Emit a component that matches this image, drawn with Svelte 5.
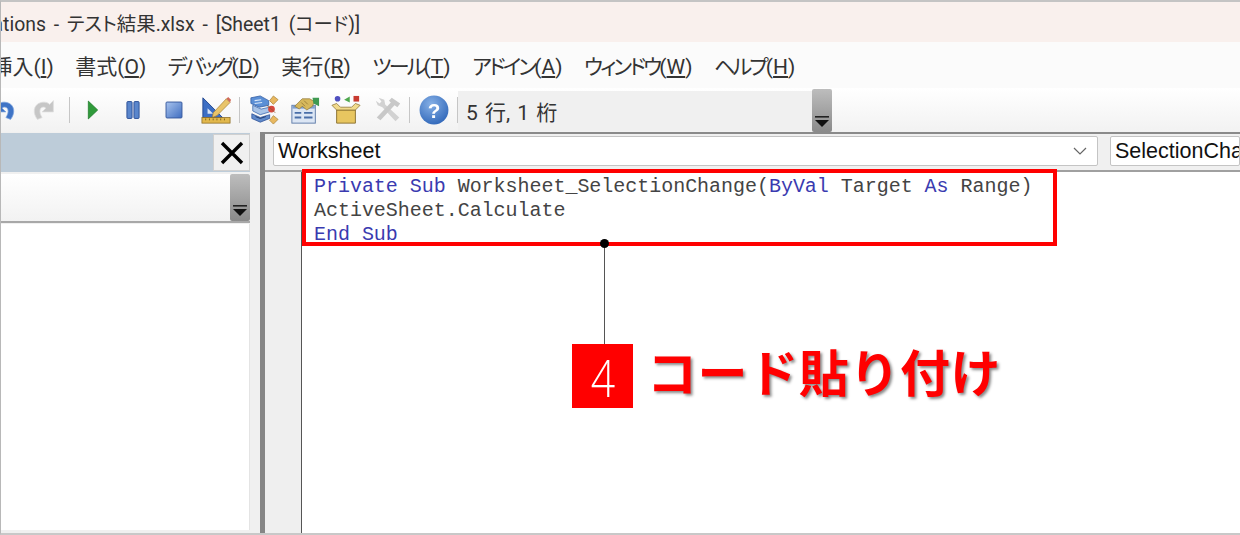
<script>
    const menus = [
        { label: '挿入', key: 'I' },
        { label: '書式', key: 'O' },
        { label: 'デバッグ', key: 'D', kana: true },
        { label: '実行', key: 'R' },
        { label: 'ツール', key: 'T', kana: true },
        { label: 'アドイン', key: 'A', kana: true },
        { label: 'ウィンドウ', key: 'W', kana: true },
        { label: 'ヘルプ', key: 'H', kana: true }
    ];
</script>

{#snippet chevron()}
    <div class="overflow-btn">
        <svg width="20" height="14" viewBox="0 0 20 14">
            <rect x="3" y="0" width="14" height="1.6" fill="#222" />
            <path d="M3 4 H17 L10 11 Z" fill="#111" />
        </svg>
    </div>
{/snippet}

<div class="window">
    <div class="titlebar"><span class="title">Microsoft Visual Basic for Applications - テスト結果.xlsx - [Sheet1 (コード)]</span></div>

    <div class="menubar">
        {#each menus as m, i}
            <span class="menu-item" class:first={i === 0}><span class:kana={m.kana}>{m.label}</span>(<u>{m.key}</u>)</span>
        {/each}
    </div>

    <div class="toolbar">
        <svg class="tb undo" viewBox="0 0 32 32">
            <path transform="translate(32 0) scale(-1 1)" d="M9 26 C4 20 4 10 13 8 C17 7 20 8 22 10 L26 6 V18 H14 L18 14 C16 12 13 13 12 15 C11 18 12 21 14 24 Z" fill="#3f74c6" stroke="#7fa4dc" stroke-width="0.8" />
        </svg>
        <svg class="tb redo" viewBox="0 0 32 32">
            <path d="M9 26 C4 20 4 10 13 8 C17 7 20 8 22 10 L26 6 V18 H14 L18 14 C16 12 13 13 12 15 C11 18 12 21 14 24 Z" fill="#c6c6c6" stroke="#dcdcdc" stroke-width="0.8" />
        </svg>
        <i class="sep sep-a"></i>
        <svg class="tb play" viewBox="0 0 32 32">
            <path d="M11 6.5 L21 16 L11 25.5 Z" fill="#2f9a3a" stroke="#1f7a2a" stroke-width="0.8" />
        </svg>
        <svg class="tb" viewBox="0 0 32 32">
            <rect x="9.5" y="7" width="5.5" height="18" rx="1" fill="#5a86cc" stroke="#2c4f96" />
            <rect x="17" y="7" width="5.5" height="18" rx="1" fill="#5a86cc" stroke="#2c4f96" />
        </svg>
        <svg class="tb stop" viewBox="0 0 32 32">
            <defs>
                <linearGradient id="stopfill" x1="0" y1="0" x2="1" y2="1">
                    <stop offset="0" stop-color="#a9c4ee" />
                    <stop offset="1" stop-color="#3f6dc0" />
                </linearGradient>
            </defs>
            <rect x="7.5" y="7.5" width="17" height="17" rx="1" fill="url(#stopfill)" stroke="#35589c" />
        </svg>
        <svg class="tb design" viewBox="0 0 32 32">
            <path d="M2 3 L23 24 H2 Z" fill="#3c6ec4" stroke="#23478f" />
            <path d="M7 14 L13 20 H7 Z" fill="#d8e4f6" />
            <path d="M13 19 L27 4 L31 8 L17 22 L12 24 Z" fill="#e9c46a" stroke="#a07a30" stroke-width="0.7" />
            <path d="M27 4 L29 2 L32 5 L31 8 Z" fill="#d06a5a" />
            <rect x="1" y="24" width="30" height="6" fill="#e2b84c" stroke="#8a6a20" stroke-width="0.8" />
            <path d="M5 25 V27 M9 25 V27 M13 25 V27 M17 25 V27 M21 25 V27 M25 25 V27" stroke="#6a5010" stroke-width="0.8" />
        </svg>
        <i class="sep sep-b"></i>
        <svg class="tb proj" viewBox="0 0 32 32">
            <path d="M2 3 L12 1 L21 6 L21 11 L11 13 L2 9 Z" fill="#5b8fd6" stroke="#2f5aa0" stroke-width="0.8" />
            <path d="M6 6 L13 5 M6 9 L14 8" stroke="#dbe8f8" stroke-width="1.2" />
            <path d="M4 11 L13 15 L22 13 V18 L12 21 L4 17 Z" fill="#a9c4e8" stroke="#3a66ac" stroke-width="0.8" />
            <path d="M3 20 L12 24 L22 21 V25 L12 29 L3 25 Z" fill="#5f8acb" stroke="#2c4f96" stroke-width="0.8" />
            <path d="M7 23 L12 25 L18 23" stroke="#1f3a70" stroke-width="1" fill="none" />
            <path d="M26 1 L31 5 L26 10 L22 6 Z" fill="#e8b860" stroke="#a07a30" stroke-width="0.7" />
            <circle cx="24" cy="15" r="3.6" fill="#d8483e" />
            <path d="M19 11 L24 15 L28 19" stroke="#8a5a30" stroke-width="0.8" fill="none" />
            <path d="M26 22 L31 26 L26 31 L22 27 Z" fill="#e8b860" stroke="#a07a30" stroke-width="0.7" />
        </svg>
        <svg class="tb" viewBox="0 0 32 32">
            <rect x="2" y="11" width="25" height="19" fill="#dce6f4" stroke="#5d7ba8" />
            <rect x="2.5" y="11.5" width="24" height="3" fill="#7fa0d0" />
            <path d="M5 19 H12 M5 24 H12 M15 19 H24 M15 24 H24" stroke="#4a6fa8" stroke-width="2" />
            <path d="M5 12 L13 4 H21 L26 7 L24 12 L18 16 L13 12 L10 15 Z" fill="#d6b85c" stroke="#8a7030" stroke-width="0.7" />
            <path d="M12 8 L16 12 M15 6 L19 10" stroke="#8a7030" stroke-width="0.8" />
            <path d="M24 3 L31 3 V12 L25 9 Z" fill="#3f9a52" />
        </svg>
        <svg class="tb obj" viewBox="0 0 32 32">
            <circle cx="7" cy="4" r="3" fill="#5050c0" />
            <path d="M14 5 L20 1.5 V8 Z" fill="#4ea84e" />
            <rect x="24" y="1" width="6" height="6" fill="#c83a30" />
            <path d="M6 16 H26 V30 H6 Z" fill="#e8c660" stroke="#8a7030" />
            <path d="M1 11 L6 9 L10 13 H22 L26 9 L31 11 L26 16 H6 Z" fill="#f1da8c" stroke="#8a7030" stroke-width="0.8" />
        </svg>
        <svg class="tb tools" viewBox="0 0 32 32">
            <path d="M6 3 L12 5 L13 10 L28 24 L24 28 L10 13 L5 11 L3 6 L7 9 L9 7 Z" fill="#d2d2d2" />
            <path d="M20 3 L29 9 L26 13 L23 11 L8 27 L4 24 L19 8 L17 6 Z" fill="#c8c8c8" />
        </svg>
        <i class="sep sep-c"></i>
        <svg class="tb help" viewBox="0 0 32 32">
            <defs>
                <radialGradient id="helpfill" cx="0.4" cy="0.3" r="0.8">
                    <stop offset="0" stop-color="#86b0e6" />
                    <stop offset="1" stop-color="#2a62b6" />
                </radialGradient>
            </defs>
            <circle cx="16" cy="16" r="15.4" fill="url(#helpfill)" />
            <text x="16" y="24" class="help-mark">?</text>
        </svg>
        <i class="sep sep-d"></i>
        <div class="status">5 行, 1 桁</div>
        {@render chevron()}
    </div>

    <div class="workspace">
        <aside class="left">
            <div class="panel-head">
                <button class="close-btn" aria-label="閉じる">
                    <svg width="26" height="26" viewBox="0 0 26 26">
                        <path d="M3 3 L23 23 M23 3 L3 23" stroke="#000" stroke-width="3.4" />
                    </svg>
                </button>
            </div>
            <div class="panel-combo">{@render chevron()}</div>
            <div class="panel-list"></div>
        </aside>

        <div class="splitter"></div>

        <section class="editor">
            <div class="combos">
                <div class="combo main">
                    <span>Worksheet</span>
                    <svg width="14" height="8" viewBox="0 0 14 8">
                        <path d="M1 1 L7 7 L13 1" fill="none" stroke="#666" stroke-width="1.2" />
                    </svg>
                </div>
                <div class="combo proc"><span>SelectionChange</span></div>
            </div>
            <div class="code-wrap">
                <div class="gutter"></div>
                <pre class="code"><span class="kw">Private Sub</span> Worksheet_SelectionChange(<span class="kw">ByVal</span> Target <span class="kw">As</span> Range)
ActiveSheet.Calculate
<span class="kw">End Sub</span></pre>
            </div>
        </section>
    </div>

    <div class="highlight"></div>
    <div class="leader"></div>
    <div class="callout">
        <div class="badge"><span>4</span></div>
        <div class="callout-text">コード貼り付け</div>
    </div>
</div>

<style>
    :global(body) {
        margin: 0;
        background: #fff;
    }

    .window {
        position: relative;
        width: 1240px;
        height: 535px;
        overflow: hidden;
        box-sizing: border-box;
        display: flex;
        flex-direction: column;
        border-top: 2px solid #c4c4c4;
        border-left: 1px solid #b8b8b8;
        border-bottom: 2px solid #c8c8c8;
        background: #f0f0f0;
        font-family: Roboto, "Noto Sans CJK JP", sans-serif;
        font-feature-settings: "palt";
        color: #333;
    }

    .titlebar {
        height: 40px;
        flex: none;
        background: #f9f0ed;
        display: flex;
        align-items: center;
        overflow: hidden;
    }

    .title {
        font-size: 19.4px;
        word-spacing: 3px;
        white-space: nowrap;
        margin-left: -302px;
    }

    .menubar {
        height: 46px;
        flex: none;
        background: #fbfbfb;
        display: flex;
        align-items: center;
        gap: 21.5px;
        overflow: hidden;
        font-size: 21px;
        white-space: nowrap;
    }

    .menu-item.first {
        margin-left: -9.5px;
    }

    .kana {
        letter-spacing: -2.8px;
    }

    .toolbar {
        height: 44px;
        flex: none;
        display: flex;
        align-items: center;
        background: linear-gradient(#fff, #f2f2f2);
        overflow: hidden;
    }

    .tb {
        width: 30px;
        height: 30px;
        flex: none;
        margin: 0 5px;
        filter: blur(0.4px);
    }

    .undo { margin-left: -12px; }
    .redo { margin-left: 5px; }
    .play { margin-left: 8px; }
    .stop { margin-left: 6px; }
    .design { margin-left: 7px; margin-right: 6px; }
    .proj { margin-left: 9px; margin-right: 6px; }
    .obj { margin-left: 6px; }
    .tools { margin-left: 7px; }
    .help { margin-left: 9px; }

    .help-mark {
        font: bold 22px "Liberation Sans", sans-serif;
        fill: #fff;
        text-anchor: middle;
    }

    .sep {
        width: 1px;
        height: 26px;
        flex: none;
        background: #c6c6c6;
    }

    .sep-a { margin-left: 5px; }
    .sep-b { margin-left: 2px; }
    .sep-c { margin-left: 1px; }
    .sep-d { margin-left: 3px; }

    .status {
        width: 346px;
        height: 40px;
        margin-top: 2px;
        padding-left: 8px;
        flex: none;
        display: flex;
        align-items: center;
        background: #f0f0f0;
        font-size: 21px;
        word-spacing: 2px;
    }

    .overflow-btn {
        width: 20px;
        height: 43px;
        flex: none;
        display: flex;
        align-items: flex-end;
        padding-bottom: 2px;
        box-sizing: border-box;
        background: linear-gradient(#bdbdbd, #8a8a8a);
        border-radius: 2px;
    }

    .workspace {
        flex: 1;
        min-height: 0;
        display: flex;
    }

    .left {
        width: 249px;
        flex: none;
        display: flex;
        flex-direction: column;
        margin-top: 1px;
    }

    .panel-head {
        height: 39px;
        flex: none;
        display: flex;
        align-items: center;
        justify-content: flex-end;
        background: #bdccd9;
    }

    .close-btn {
        width: 37px;
        height: 37px;
        padding: 0;
        display: flex;
        align-items: center;
        justify-content: center;
        background: #f0f0f0;
        border: 1px solid #d0d0d0;
    }

    .panel-combo {
        height: 47px;
        flex: none;
        margin-top: 2px;
        display: flex;
        justify-content: flex-end;
        background: linear-gradient(#fff, #f2f2f2);
        border-bottom: 2px solid #a8a8a8;
    }

    .panel-combo .overflow-btn {
        height: 47px;
    }

    .panel-list {
        flex: 1;
        background: #fff;
        margin-top: 1px;
        margin-bottom: 3px;
        border-right: 1px solid #e4e4e4;
    }

    .splitter {
        width: 5px;
        flex: none;
        margin-left: 10px;
        background: #868686;
    }

    .editor {
        flex: 1;
        min-width: 0;
        display: flex;
        flex-direction: column;
        border-top: 2px solid #8a8a8a;
    }

    .combos {
        height: 38px;
        flex: none;
        box-sizing: border-box;
        padding: 2px 0 4px 8px;
        display: flex;
        gap: 12px;
        border-bottom: 2px solid #a0a0a0;
    }

    .combo {
        height: 30px;
        box-sizing: border-box;
        display: flex;
        align-items: center;
        padding: 0 4px;
        background: #fff;
        border: 1px solid #c4c4c4;
        border-radius: 2px;
        color: #111;
        font-family: "Liberation Sans", "Noto Sans CJK JP", sans-serif;
        font-size: 21.5px;
        overflow: hidden;
        white-space: nowrap;
    }

    .combo.main {
        width: 825px;
        flex: none;
        justify-content: space-between;
        padding-right: 10px;
    }

    .combo.proc {
        flex: 1;
        min-width: 0;
    }

    .code-wrap {
        flex: 1;
        min-height: 0;
        display: flex;
    }

    .gutter {
        width: 36px;
        flex: none;
        background: #efefef;
        border-right: 1.5px solid #555;
    }

    .code {
        flex: 1;
        margin: 0;
        padding: 3px 0 0 12px;
        background: #fff;
        font-family: "Liberation Mono", monospace;
        font-size: 20px;
        letter-spacing: -0.03px;
        line-height: 24px;
        color: #444;
    }

    .kw {
        color: #3a3ab0;
    }

    .highlight {
        position: absolute;
        left: 301px;
        top: 167px;
        width: 755px;
        height: 77px;
        box-sizing: border-box;
        border: 4px solid #f00;
    }

    .leader {
        position: absolute;
        left: 603px;
        top: 241px;
        width: 1px;
        height: 101px;
        background: #555;
    }

    .leader::before {
        content: "";
        position: absolute;
        left: -4px;
        top: -4px;
        width: 9px;
        height: 9px;
        border-radius: 50%;
        background: #000;
    }

    .callout {
        position: absolute;
        left: 571px;
        top: 342px;
        display: flex;
        align-items: flex-start;
        gap: 14px;
    }

    .badge {
        width: 61px;
        height: 64px;
        display: flex;
        align-items: center;
        justify-content: center;
        background: #f00;
        color: #fff;
        font-family: "Open Sans", sans-serif;
        font-weight: 300;
        font-size: 52px;
    }

    .badge span {
        display: inline-block;
        transform: scaleX(0.82);
    }

    .callout-text {
        font-family: "Noto Sans CJK JP", sans-serif;
        font-feature-settings: normal;
        font-weight: 700;
        font-size: 50px;
        letter-spacing: 0.6px;
        line-height: 52px;
        color: #f00;
        white-space: nowrap;
        text-shadow: 2px 2px 3px #888;
    }
</style>
